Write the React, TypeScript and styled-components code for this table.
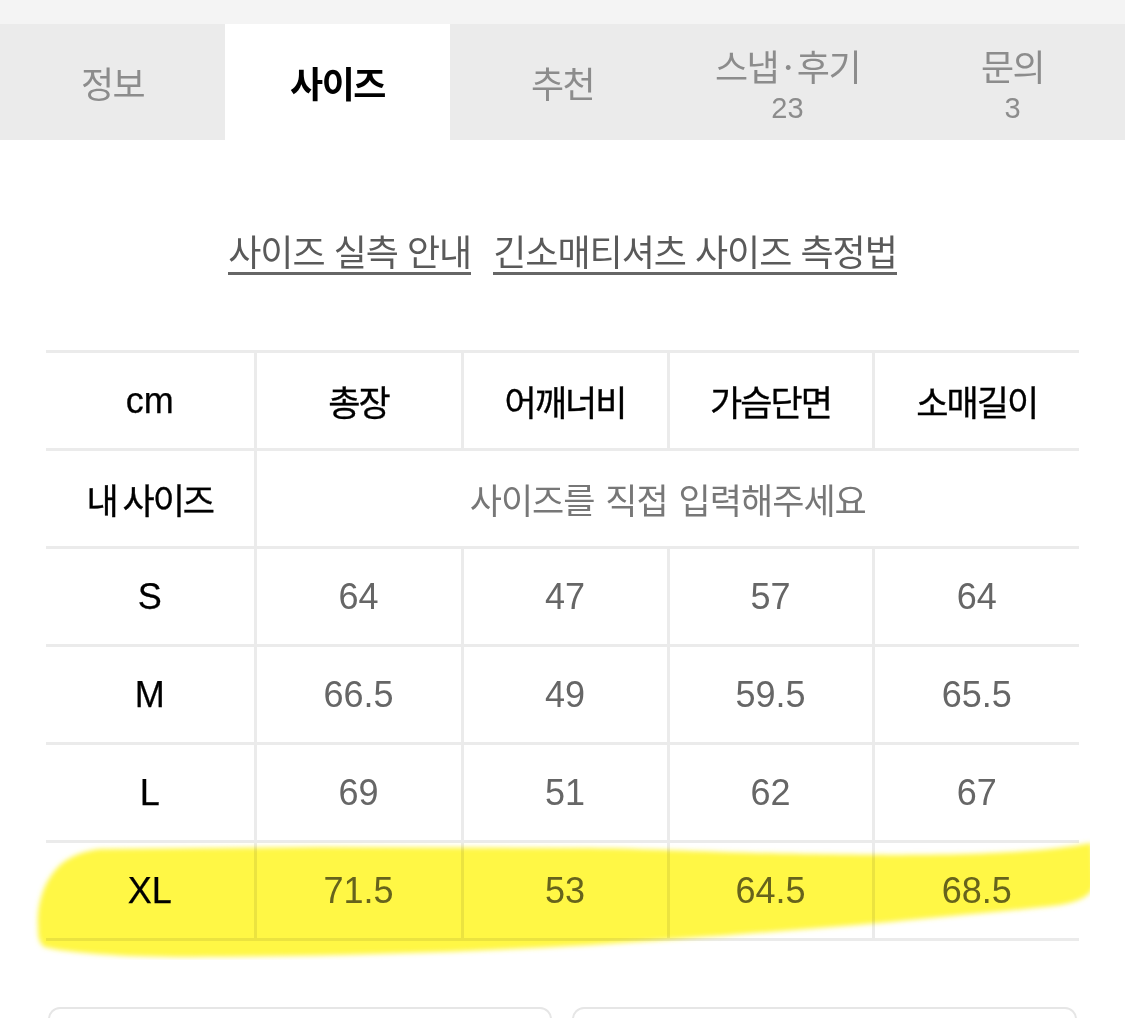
import React from "react";
import styled, { createGlobalStyle } from "styled-components";

const Global = createGlobalStyle`
  html, body { margin: 0; padding: 0; background: #fff; }
  body { font-family: "Liberation Sans", "Noto Sans CJK KR", sans-serif; overflow: hidden; }
`;

const KR = `"Noto Sans CJK KR", "Liberation Sans", sans-serif`;
const LAT = `"Liberation Sans", "Noto Sans CJK KR", sans-serif`;

const Page = styled.div`
  width: 1125px;
  height: 1018px;
  overflow: hidden;
  display: flex;
  flex-direction: column;
  & > * { flex-shrink: 0; }
`;

const TopStrip = styled.div`
  height: 24px;
  background: #f4f4f4;
`;

const TabBar = styled.nav`
  display: grid;
  grid-template-columns: repeat(5, 225px);
  height: 116px;
  background: #ebebeb;
`;

const Tab = styled.div<{ $active?: boolean }>`
  display: flex;
  flex-direction: column;
  align-items: center;
  justify-content: center;
  gap: 10px;
  background: ${(p) => (p.$active ? "#fff" : "transparent")};
  color: ${(p) => (p.$active ? "#000" : "#8c8c8c")};
  font-weight: ${(p) => (p.$active ? 700 : 400)};
`;

const TabLabel = styled.div`
  font-family: ${KR};
  font-size: 36px;
  line-height: 36px;
  height: 36px;
  letter-spacing: -1.5px;
`;

const TabCount = styled.div`
  font-family: ${LAT};
  font-weight: 400;
  font-size: 29px;
  line-height: 30px;
  height: 30px;
  margin-bottom: -6px;
  color: #8c8c8c;
`;

const LinkRow = styled.div`
  display: flex;
  justify-content: center;
  gap: 22px;
  height: 210px;
  padding-top: 88px;
  box-sizing: border-box;
`;

const GuideLink = styled.a`
  font-family: ${KR};
  font-size: 36px;
  line-height: 44px;
  height: 47px;
  color: #5a5a5a;
  text-decoration: none;
  letter-spacing: -1px;
  word-spacing: 2px;
  border-bottom: 3px solid #666;
  box-sizing: border-box;
`;

const TableWrap = styled.div`
  position: relative;
  margin: 0 46px;
`;

const SizeTable = styled.table`
  width: 1033px;
  border-collapse: collapse;
  table-layout: fixed;
`;

type Kind = "label" | "head" | "value" | "hint";

const Cell = styled.td<{ $kind: Kind }>`
  height: 95px;
  padding: 0;
  text-align: center;
  vertical-align: middle;
  border-top: 3px solid #ebebeb;
  border-bottom: 3px solid #ebebeb;
  border-left: 3px solid #ebebeb;
  &:first-child { border-left: none; }
  font-family: ${(p) => (p.$kind === "value" || p.$kind === "label" ? LAT : KR)};
  font-size: ${(p) => (p.$kind === "value" || p.$kind === "label" ? "36px" : "35px")};
  font-weight: 400;
  -webkit-text-stroke: ${(p) => (p.$kind === "head" ? "0.35px #000" : p.$kind === "label" ? "0.25px #000" : "0")};
  letter-spacing: ${(p) => (p.$kind === "head" ? "-2px" : p.$kind === "hint" ? "-1px" : "0")};
  word-spacing: ${(p) => (p.$kind === "hint" ? "4px" : "0")};
  color: ${(p) => (p.$kind === "value" ? "#666" : p.$kind === "hint" ? "#777" : "#000")};
`;

const KrLabel = styled.span`
  font-family: ${KR};
  font-size: 35px;
  letter-spacing: -2px;
  -webkit-text-stroke: 0.35px #000;
`;

const Highlight = styled.svg`
  position: absolute;
  left: -16px;
  top: 485px;
  width: 1060px;
  height: 125px;
  mix-blend-mode: multiply;
  pointer-events: none;
`;

const ButtonRow = styled.div`
  display: grid;
  grid-template-columns: 504px 505px;
  gap: 20px;
  margin: 66px 0 0 48px;
`;

const OutlineButton = styled.div`
  height: 60px;
  border: 2px solid #e6e6e6;
  border-radius: 12px;
  background: #fff;
`;

const tabs = [
  { label: "정보" },
  { label: "사이즈", active: true },
  { label: "추천" },
  { label: "스냅·후기", count: "23" },
  { label: "문의", count: "3" },
];

const heads = ["총장", "어깨너비", "가슴단면", "소매길이"];
const rows: [string, string[]][] = [
  ["S", ["64", "47", "57", "64"]],
  ["M", ["66.5", "49", "59.5", "65.5"]],
  ["L", ["69", "51", "62", "67"]],
  ["XL", ["71.5", "53", "64.5", "68.5"]],
];

export default function App() {
  return (
    <Page>
      <Global />
      <TopStrip />
      <TabBar>
        {tabs.map((t) => (
          <Tab key={t.label} $active={t.active}>
            <TabLabel>{t.label}</TabLabel>
            {t.count && <TabCount>{t.count}</TabCount>}
          </Tab>
        ))}
      </TabBar>
      <LinkRow>
        <GuideLink>사이즈 실측 안내</GuideLink>
        <GuideLink>긴소매티셔츠 사이즈 측정법</GuideLink>
      </LinkRow>
      <TableWrap>
        <SizeTable>
          <colgroup>
            <col style={{ width: 209 }} />
            <col style={{ width: 207 }} />
            <col style={{ width: 206 }} />
            <col style={{ width: 205 }} />
            <col style={{ width: 206 }} />
          </colgroup>
          <tbody>
            <tr>
              <Cell $kind="label">cm</Cell>
              {heads.map((h) => (
                <Cell key={h} $kind="head">{h}</Cell>
              ))}
            </tr>
            <tr>
              <Cell $kind="label"><KrLabel>내 사이즈</KrLabel></Cell>
              <Cell $kind="hint" colSpan={4}>사이즈를 직접 입력해주세요</Cell>
            </tr>
            {rows.map(([size, vals]) => (
              <tr key={size}>
                <Cell $kind="label">{size}</Cell>
                {vals.map((v, i) => (
                  <Cell key={i} $kind="value">{v}</Cell>
                ))}
              </tr>
            ))}
          </tbody>
        </SizeTable>
        <Highlight viewBox="0 0 1060 125">
          <defs>
            <filter id="soft" x="-5%" y="-20%" width="110%" height="140%">
              <feGaussianBlur stdDeviation="2.5" />
            </filter>
          </defs>
          <path
            filter="url(#soft)"
            fill="#fff745"
            d="M8 92 C6 70 14 45 30 30 C42 20 55 16 70 14 L290 12 L560 13 C640 14 700 19 860 20 C930 20 980 18 1020 14 C1040 12 1055 9 1062 8 L1064 50 C1060 62 1050 66 1030 70 C990 75 930 80 860 87 C760 96 650 104 560 110 C420 118 300 121 160 122 C90 122 40 118 14 112 C8 106 8 100 8 92 Z"
          />
        </Highlight>
      </TableWrap>
      <ButtonRow>
        <OutlineButton />
        <OutlineButton />
      </ButtonRow>
    </Page>
  );
}
